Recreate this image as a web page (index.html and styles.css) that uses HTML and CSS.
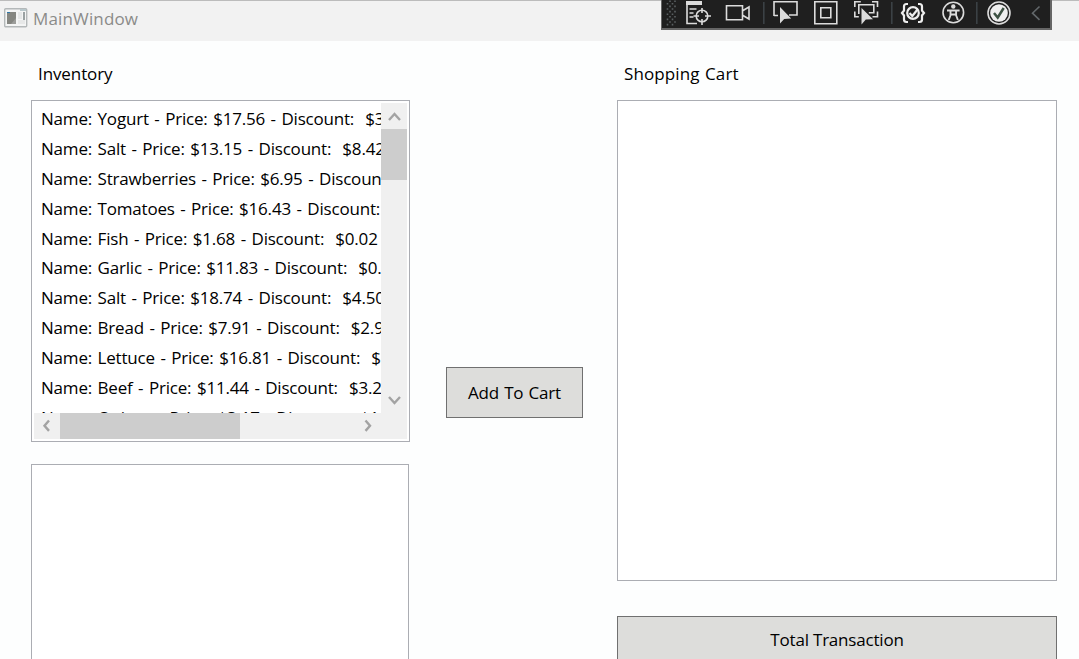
FILE: index.html
```html
<!DOCTYPE html>
<html lang="en">
<head>
<meta charset="utf-8">
<title>MainWindow</title>
<link rel="stylesheet" href="styles.css">
</head>
<body>
<header class="titlebar">
  <svg class="app-icon" width="24" height="20" viewBox="0 0 24 20">
    <rect x=".7" y=".7" width="22" height="18" rx="1" fill="#f4f5f5" stroke="#b4b8b9" stroke-width="1.4"/>
    <path d="M16 1h6v2h-6z" fill="#b9c8cc"/>
    <rect x="3" y="4" width="9" height="12" fill="#858681"/>
    <path d="M3 4h3v1H3z" fill="#2d78aa"/>
    <path d="M12 10v6H7z" fill="#9c9d9a"/>
    <rect x="14" y="4" width="4" height="7" fill="#e5e7e7"/>
    <rect x="19" y="4" width="2" height="8" fill="#9aa1a2"/>
    <rect x="14" y="12" width="7" height="4" fill="#e7e8e8"/>
  </svg>
  <span class="window-title">MainWindow</span>
</header>

<div class="debug-toolbar">
  <svg width="388" height="28" viewBox="0 0 388 28" fill="none" stroke="#dcdcdc" stroke-width="1.6">
    <g stroke="#5a6062" stroke-width="1.6" stroke-dasharray="1.6 3.6">
      <path d="M5.500 3v24M10.500 3v24M8 .4v25M13 .4v25"/>
    </g>
    <path d="M24 1h16v4H24z" fill="#dcdcdc" stroke="none"/>
    <path d="M25 2v21.500h10M27.500 9h7M27.500 13h4M27.500 17h4"/>
    <circle cx="40" cy="16" r="5.800"/>
    <path d="M40 8v5M40 19v6M31.500 16H37M43 16h6"/>
    <path d="M64.500 5.800h16v14h-16zM81 10.500l6-3.500v12l-6-3.500"/>
    <path d="M101.800 2v22M229.800 2v22M314.800 2v22" stroke="#3b4145"/>
    <path d="M112 16V1.800h23V15h-8M112 15.500h4"/>
    <path d="M118 7v16.500l4.200-4.600 7-.4z" fill="#dcdcdc" stroke="none"/>
    <path d="M152.800 1.800h22v22h-22zM158.800 7.800h10v10h-10z"/>
    <path d="M192.800 7V1.800h6M210 1.800h5.500V7M215.500 11.500v5.300h-5M192.800 11.500v5.300h4M196.800 14V4.800h15v8h-5"/>
    <path d="M199.500 8v16.500l4.300-5 7.200-.3z" fill="#dcdcdc" stroke="none"/>
    <path d="M246 4h-1.500q-2.500 0-2.500 2.500v4L240 13l2 2.500v4q0 2.500 2.500 2.500h1.500M256 4h1.500q2.500 0 2.500 2.500v4l2 2.500-2 2.500v4q0 2.500-2.500 2.500H256" stroke="#eee" stroke-width="2.200"/>
    <circle cx="251" cy="13" r="5.800" stroke="#eee" stroke-width="2.200"/>
    <path d="M247.500 13l2.800 3 5.200-6.500" stroke="#eee" stroke-width="2.200"/>
    <circle cx="291.300" cy="12.500" r="10.300"/>
    <circle cx="291.300" cy="6.500" r="2.200" fill="#dcdcdc" stroke="none"/>
    <path d="M285 10.500h12.600M288.500 10.500h5.600v4h-5.600zM289 14l-2.300 6M293.600 14l2.300 6" stroke-width="1.900"/>
    <circle cx="337" cy="13" r="11"/>
    <circle cx="337" cy="13" r="8.800" fill="#efefef" stroke="none"/>
    <path d="M332 13l3.700 4.500 6-9.500" stroke="#3e5244" stroke-width="2.500"/>
    <path d="M377.500 6.500l-7 6.700 7 6.700" stroke="#62676a"/>
  </svg>
</div>

<main class="content">
  <section class="inventory">
    <h2 class="label">Inventory</h2>
    <div class="listbox inventory-list">
      <ul class="items">
        <li>Name: Yogurt - Price: $17.56 - Discount:&nbsp; $3</li>
        <li>Name: Salt - Price: $13.15 - Discount:&nbsp; $8.42</li>
        <li>Name: Strawberries - Price: $6.95 - Discoun</li>
        <li>Name: Tomatoes - Price: $16.43 - Discount:</li>
        <li>Name: Fish - Price: $1.68 - Discount:&nbsp; $0.02</li>
        <li>Name: Garlic - Price: $11.83 - Discount:&nbsp; $0.</li>
        <li>Name: Salt - Price: $18.74 - Discount:&nbsp; $4.50</li>
        <li>Name: Bread - Price: $7.91 - Discount:&nbsp; $2.9</li>
        <li>Name: Lettuce - Price: $16.81 - Discount:&nbsp; $</li>
        <li>Name: Beef - Price: $11.44 - Discount:&nbsp; $3.2</li>
        <li>Name: Onions - Price: $3.17 - Discount:&nbsp; $1</li>
      </ul>
      <div class="vbar">
        <svg width="26" height="26" viewBox="0 0 26 26"><path d="M8 17l5.500-6 5.500 6" /></svg>
        <div class="vthumb"></div>
        <svg class="last" width="26" height="26" viewBox="0 0 26 26"><path d="M8 10l5.500 6 5.500-6" /></svg>
      </div>
      <div class="hbar">
        <svg width="26" height="26" viewBox="0 0 26 26"><path d="M15 7.500l-4.500 5.200 4.500 5.200" /></svg>
        <div class="hthumb"></div>
        <svg class="last" width="26" height="26" viewBox="0 0 26 26"><path d="M10.500 7.500l4.500 5.200-4.500 5.200" /></svg>
      </div>
      <div class="corner"></div>
    </div>
    <div class="listbox details"></div>
  </section>

  <button class="button add">Add To Cart</button>

  <section class="cart">
    <h2 class="label">Shopping Cart</h2>
    <div class="listbox cart-list"></div>
    <button class="button total">Total Transaction</button>
  </section>
</main>
</body>
</html>
```
FILE: styles.css
```css
* { box-sizing: border-box; }
html, body { margin: 0; height: 659px; overflow: hidden; }
body {
  background: #fdfefe;
  color: #000;
  font-family: "Open Sans", "Noto Sans", sans-serif;
  font-size: 17px;
  letter-spacing: -0.2px;
}
.titlebar {
  height: 41px;
  display: flex;
  align-items: flex-start;
  gap: 5px;
  padding: 7px 0 0 4px;
  background: #f2f2f2;
  border-top: 1px solid #bcbcbc;
}
.window-title { color: #8b8b89; line-height: 22px; letter-spacing: 0.15px; }
.debug-toolbar {
  position: absolute;
  left: 661px;
  top: 0;
  width: 391px;
  height: 30px;
  background: #1f1f1f;
  border: solid #666;
  border-width: 0 2px 2px 1px;
}
.debug-toolbar svg { display: block; }
.content {
  display: grid;
  grid-template-columns: 379px 138px 440px;
  column-gap: 35px;
  height: 618px;
  padding-left: 31px;
}
.cart { margin-left: -1px; width: 440px; }
.label {
  margin: 0;
  height: 59px;
  padding: 21px 0 0 7px;
  font: inherit;
  line-height: 24px;
}
.inventory .label { letter-spacing: -0.1px; }
.cart .label { letter-spacing: 0.1px; word-spacing: 1px; }
.listbox { border: 1px solid #abadb3; background: #fff; }
.inventory-list {
  height: 342px;
  padding: 2px;
  display: grid;
  grid-template: 310px 26px / 347px 26px;
}
.items {
  margin: 0;
  padding: 0 0 0 7px;
  list-style: none;
  overflow: hidden;
  word-spacing: 1.35px;
}
.items li { height: 29.9px; line-height: 31px; white-space: nowrap; }
.vbar, .hbar { display: flex; background: #f0f0f0; }
.vbar { flex-direction: column; }
.hbar svg, .vbar svg { flex: none; fill: none; stroke: #a3a3a3; stroke-width: 2.4; }
.vbar .last { margin: auto 0 0; }
.hbar .last { margin: 0 0 0 auto; }
.vthumb { height: 51px; background: #cdcdcd; }
.hthumb { width: 180px; background: #cdcdcd; }
.corner { background: #f0f0f0; }
.details { width: 378px; height: 220px; margin-top: 22px; }
.button {
  font: inherit;
  letter-spacing: inherit;
  color: #000;
  background: #dddddb;
  border: 1px solid #707070;
  padding: 0;
}
.add { width: 137px; height: 51px; margin-top: 326px; margin-left: 1px; word-spacing: 1px; }
.total { display: block; width: 100%; height: 46px; margin-top: 35px; }
.cart-list { height: 481px; }
```
